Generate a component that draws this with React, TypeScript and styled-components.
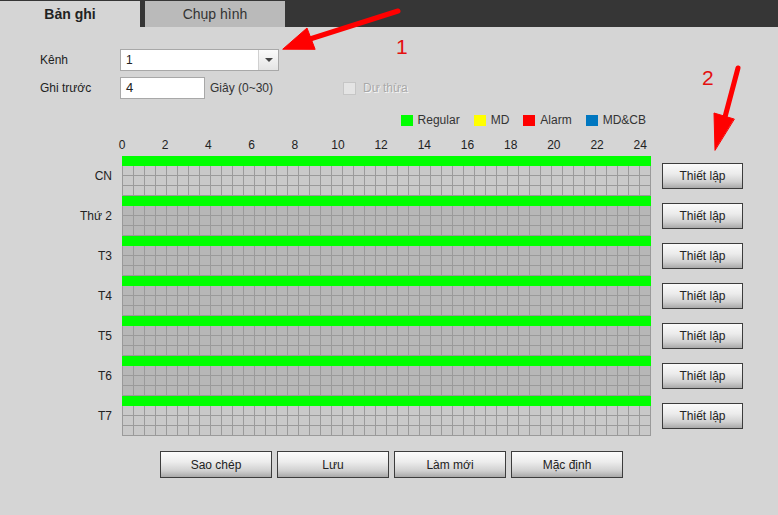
import React from "react";
import styled, { createGlobalStyle } from "styled-components";

const GlobalStyle = createGlobalStyle`
  html, body {
    margin: 0;
    height: 100%;
  }
  body {
    background: #d5d5d5;
    font-family: "Liberation Sans", Arial, sans-serif;
    color: #222;
  }
`;

const Page = styled.div`
  position: relative;
  width: 778px;
  height: 515px;
  overflow: hidden;
  background: #d5d5d5;
`;

const TabBar = styled.div`
  display: flex;
  align-items: flex-end;
  gap: 5px;
  height: 27px;
  background: #363636;
`;

const Tab = styled.div<{ $active?: boolean }>`
  width: 140px;
  height: 26px;
  display: flex;
  align-items: center;
  justify-content: center;
  font-size: 14px;
  font-weight: ${(p) => (p.$active ? 700 : 400)};
  color: ${(p) => (p.$active ? "#222" : "#333")};
  background: ${(p) => (p.$active ? "#d5d5d5" : "#bababa")};
`;

const Form = styled.div`
  padding: 22px 0 0 40px;
  display: flex;
  flex-direction: column;
  gap: 6px;
`;

const FormRow = styled.div`
  display: flex;
  align-items: center;
  height: 22px;
  font-size: 12px;
`;

const FieldLabel = styled.span`
  width: 80px;
`;

const SelectBox = styled.div`
  box-sizing: border-box;
  width: 159px;
  height: 22px;
  display: flex;
  background: #fff;
  border: 1px solid #a8a8a8;
`;

const SelectValue = styled.span`
  flex: 1;
  padding-left: 5px;
  line-height: 20px;
  font-size: 12px;
`;

const SelectArrow = styled.span`
  width: 19px;
  display: flex;
  align-items: center;
  justify-content: center;
  border-left: 1px solid #d0d0d0;
  background: linear-gradient(#fbfbfb, #e4e4e4);

  &::after {
    content: "";
    border-left: 4px solid transparent;
    border-right: 4px solid transparent;
    border-top: 4px solid #444;
  }
`;

const NumberBox = styled.div`
  box-sizing: border-box;
  width: 85px;
  height: 22px;
  padding-left: 5px;
  line-height: 20px;
  font-size: 13px;
  background: #fff;
  border: 1px solid #a8a8a8;
`;

const Unit = styled.span`
  box-sizing: border-box;
  width: 138px;
  padding-left: 5px;
  color: #333;
`;

const CheckBox = styled.span`
  box-sizing: border-box;
  width: 13px;
  height: 13px;
  background: #e4e4e4;
  border: 1px solid #c6c6c6;
`;

const CheckLabel = styled.span<{ $disabled?: boolean }>`
  margin-left: 7px;
  color: ${(p) => (p.$disabled ? "#a9a9a9" : "#222")};
  text-shadow: ${(p) => (p.$disabled ? "1px 1px 0 #f6f6f6" : "none")};
`;

const Legend = styled.div`
  margin-top: 14px;
  width: 646px;
  height: 14px;
  display: flex;
  justify-content: flex-end;
  align-items: center;
  gap: 14px;
  font-size: 12px;
  color: #333;
`;

const LegendItem = styled.span`
  display: flex;
  align-items: center;
  gap: 5px;
`;

const Swatch = styled.span<{ $color: string }>`
  width: 12px;
  height: 11px;
  background: ${(p) => p.$color};
`;

const Axis = styled.div`
  margin-top: 11px;
  padding-left: 112px;
  height: 14px;
  display: flex;
  gap: 23.2px;
`;

const AxisTick = styled.span`
  width: 20px;
  text-align: center;
  font-size: 12px;
  line-height: 14px;
  color: #222;
`;

const Schedule = styled.div`
  margin-top: 4px;
`;

const DayRow = styled.div`
  display: flex;
  align-items: center;
  height: 40px;
`;

const DayLabel = styled.span`
  box-sizing: border-box;
  width: 122px;
  padding-right: 10px;
  text-align: right;
  font-size: 12px;
`;

const DayTrack = styled.div`
  width: 529px;
  height: 40px;
  display: flex;
  flex-direction: column;
`;

const RecordBar = styled.div`
  height: 10px;
  background: #00ff00;
`;

const Cells = styled.div<{ $light: boolean }>`
  height: 30px;
  border-left: 1px solid #9a9a9a;
  background-color: ${(p) => (p.$light ? "#c9c9c9" : "#b7b7b7")};
  background-image: repeating-linear-gradient(
      to right,
      transparent 0 10px,
      #9a9a9a 10px 11px
    ),
    repeating-linear-gradient(to bottom, transparent 0 9px, #9a9a9a 9px 10px);
`;

const PushButton = styled.button`
  box-sizing: border-box;
  padding: 0;
  font-family: "Liberation Sans", Arial, sans-serif;
  font-size: 12px;
  color: #222;
  border: 1px solid #3c3c3c;
  border-radius: 0;
  background: linear-gradient(
    to bottom,
    #fbfbfb 0%,
    #ececec 40%,
    #d0d0d0 75%,
    #a9a9a9 100%
  );
`;

const SetButton = styled(PushButton)`
  margin-left: 11px;
  width: 81px;
  height: 26px;
`;

const Actions = styled.div`
  margin-top: 15px;
  padding-left: 160px;
  display: flex;
  gap: 5px;
`;

const ActionButton = styled(PushButton)`
  width: 112px;
  height: 27px;
`;

const Marks = styled.svg`
  position: absolute;
  left: 0;
  top: 0;
  pointer-events: none;
`;

const days = [
  { name: "CN", light: true },
  { name: "Thứ 2", light: false },
  { name: "T3", light: false },
  { name: "T4", light: false },
  { name: "T5", light: false },
  { name: "T6", light: false },
  { name: "T7", light: true },
];

const legend = [
  { label: "Regular", color: "#00ff00" },
  { label: "MD", color: "#ffff00" },
  { label: "Alarm", color: "#ff0000" },
  { label: "MD&CB", color: "#0077c0" },
];

const hours = Array.from({ length: 13 }, (_, i) => i * 2);

export default function App() {
  return (
    <Page>
      <GlobalStyle />
      <TabBar>
        <Tab $active>Bản ghi</Tab>
        <Tab>Chụp hình</Tab>
      </TabBar>

      <Form>
        <FormRow>
          <FieldLabel>Kênh</FieldLabel>
          <SelectBox>
            <SelectValue>1</SelectValue>
            <SelectArrow />
          </SelectBox>
        </FormRow>
        <FormRow>
          <FieldLabel>Ghi trước</FieldLabel>
          <NumberBox>4</NumberBox>
          <Unit>Giây (0~30)</Unit>
          <CheckBox />
          <CheckLabel $disabled>Dư thừa</CheckLabel>
        </FormRow>
      </Form>

      <Legend>
        {legend.map((item) => (
          <LegendItem key={item.label}>
            <Swatch $color={item.color} />
            {item.label}
          </LegendItem>
        ))}
      </Legend>

      <Axis>
        {hours.map((h) => (
          <AxisTick key={h}>{h}</AxisTick>
        ))}
      </Axis>

      <Schedule>
        {days.map((d) => (
          <DayRow key={d.name}>
            <DayLabel>{d.name}</DayLabel>
            <DayTrack>
              <RecordBar />
              <Cells $light={d.light} />
            </DayTrack>
            <SetButton>Thiết lập</SetButton>
          </DayRow>
        ))}
      </Schedule>

      <Actions>
        <ActionButton>Sao chép</ActionButton>
        <ActionButton>Lưu</ActionButton>
        <ActionButton>Làm mới</ActionButton>
        <ActionButton>Mặc định</ActionButton>
      </Actions>

      {/* red callouts */}
      <Marks width="778" height="515" viewBox="0 0 778 515">
        <g fill="#ff0000" stroke="#ff0000" strokeLinecap="round">
          <line x1="398" y1="11" x2="310" y2="39" strokeWidth="5" />
          <polygon points="283,49 307,28 315,49" strokeWidth="1" />
          <line x1="738" y1="68" x2="725" y2="117" strokeWidth="5" />
          <polygon points="715,150 714,113 734,119" strokeWidth="1" />
        </g>
        <g fill="#e41010" fontFamily="Liberation Sans, Arial, sans-serif" fontSize="21">
          <text x="396" y="54">1</text>
          <text x="702" y="85">2</text>
        </g>
      </Marks>
    </Page>
  );
}
